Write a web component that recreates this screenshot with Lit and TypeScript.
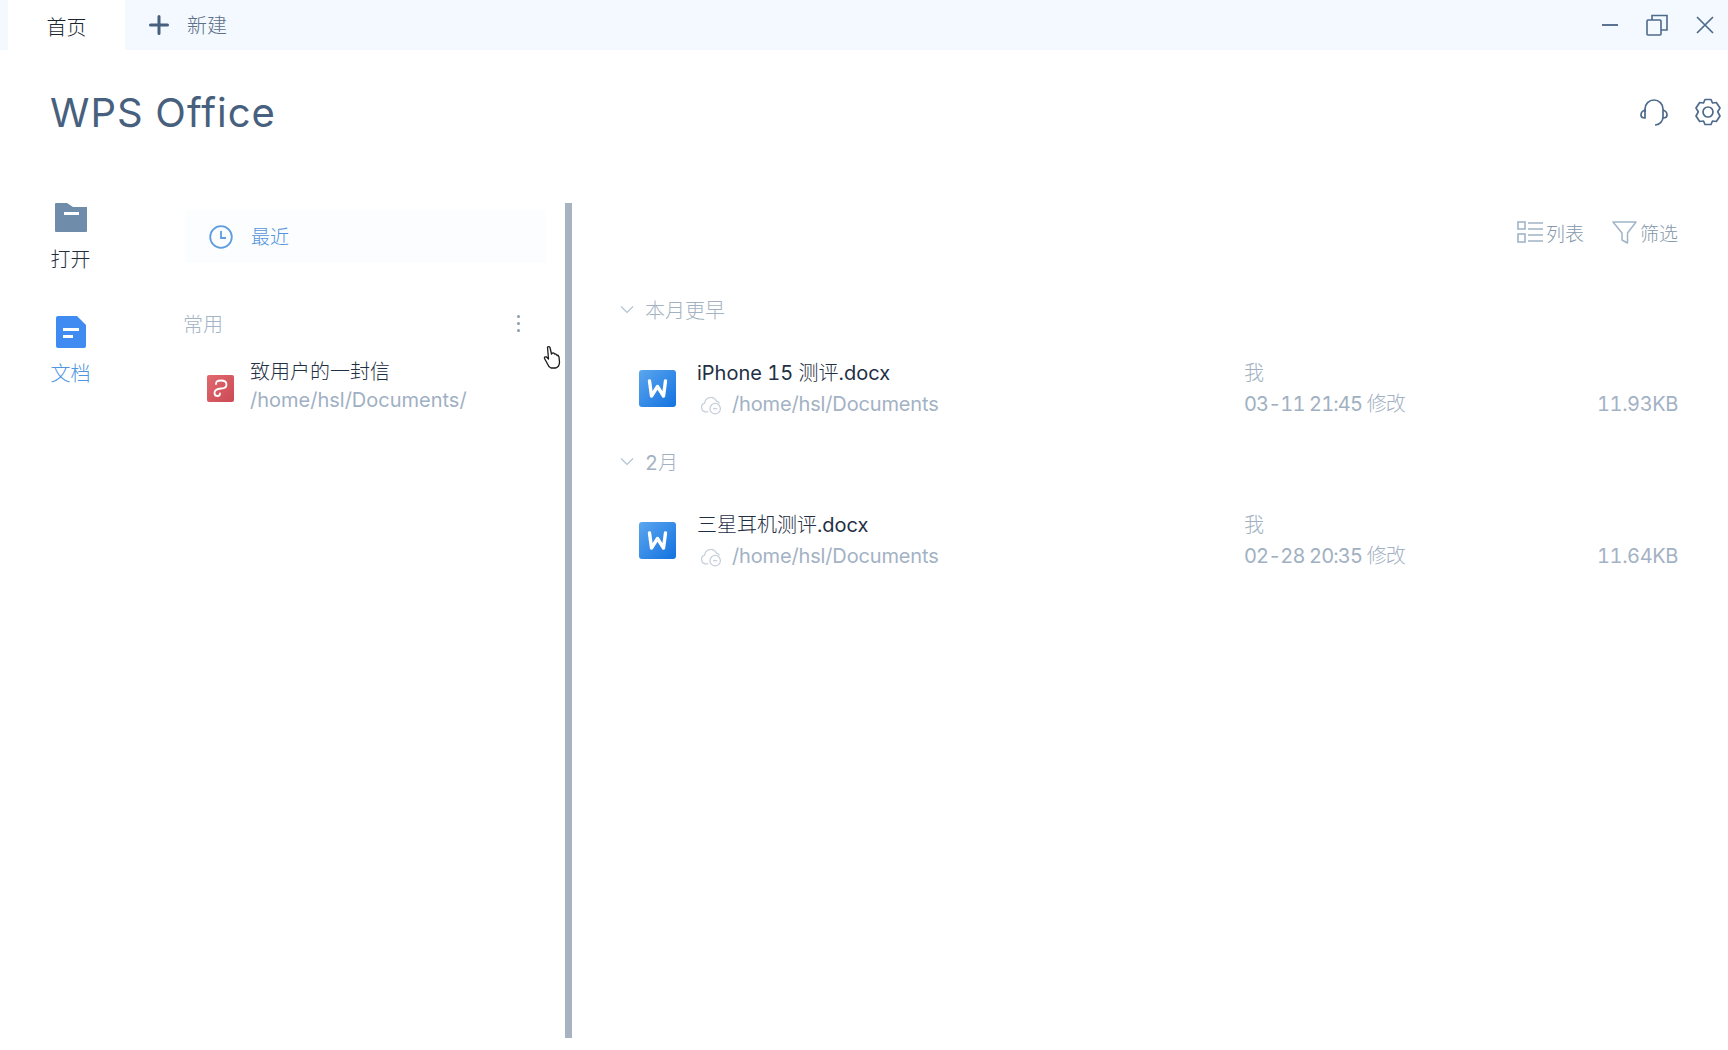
import { LitElement, html, css } from "lit";
import { customElement } from "lit/decorators.js";

const wIcon = html`<svg class="fileicon" viewBox="0 0 37 37"><defs><linearGradient id="wg" x1="0" y1="0" x2="1" y2="1"><stop offset="0" stop-color="#5ba6ee"/><stop offset="1" stop-color="#1272e0"/></linearGradient></defs><rect width="37" height="37" rx="3" fill="url(#wg)"/><path d="M10.5 11 L12.5 26 L18.5 16.5 L24.5 26 L26.5 11" fill="none" stroke="#fff" stroke-width="3.4" stroke-linecap="round" stroke-linejoin="round"/></svg>`;
const cloud = html`<svg class="cloud" viewBox="0 0 22 20" fill="none" stroke="#c5d0da" stroke-width="1.2"><path d="M8 17 H5.5 A4.3 4.3 0 0 1 4.5 8.6 A5.8 5.8 0 0 1 15.5 6.5 A4 4 0 0 1 18.5 9"/><circle cx="14.5" cy="14" r="5"/><path d="M12.5 14 H16.5"/></svg>`;
const chev = html`<svg class="chev" viewBox="0 0 14 9" fill="none" stroke="#b4c2d0" stroke-width="1.2"><path d="M1 1.5 L7 7.5 L13 1.5"/></svg>`;

/* Latin runs are regular weight, CJK runs stay light, as in the reference. */
const mixed = (text: string) =>
  text.split(/([\u0020-\u007e]+)/).filter(Boolean).map((part) =>
    /^[\u0020-\u007e]+$/.test(part) ? html`<span class="lat">${part}</span>` : part
  );

const files = [
  { group: "本月更早", name: "iPhone 15 测评.docx", date: "03-11 21:45 修改", size: "11.93KB" },
  { group: "2月", name: "三星耳机测评.docx", date: "02-28 20:35 修改", size: "11.64KB" },
];

@customElement("app-root")
export class AppRoot extends LitElement {
  static styles = css`
    :host { display: block; width: 1728px; height: 1050px; background: #fff; position: relative; overflow: hidden;
      font-family: "Inter", "Noto Sans CJK SC", sans-serif; font-weight: 300; font-size: 20px; color: #1f3044; font-variant-numeric: tabular-nums; }
    svg { display: block; flex: none; }
    .lat { font-weight: 400; white-space: pre; }
    .titlebar { height: 50px; background: #f3f9fe; display: flex; align-items: center; padding-left: 8px; }
    .tab { width: 117px; height: 50px; background: #fff; color: #1b2530; display: flex; align-items: center; justify-content: center; padding-top: 3px; box-sizing: border-box; }
    .new { display: flex; align-items: center; margin-left: 24px; color: #5d7088; gap: 18px; }
    .new span { padding-bottom: 2px; }
    .plus { width: 20px; height: 20px; }
    .winbtns { margin-left: auto; display: flex; align-items: center; padding-right: 13px; gap: 27px; }
    .header { height: 153px; display: flex; align-items: flex-start; box-sizing: border-box; padding: 43px 6px 0 50px; }
    .logo { font-family: "Inter", sans-serif; font-weight: 400; font-size: 40px; line-height: 40px; color: #47607e; letter-spacing: 1px; width: 225px; white-space: nowrap; }
    .hicons { margin-left: auto; display: flex; gap: 26px; padding-top: 5px; align-items: center; }
    .body { display: flex; height: 835px; }
    .nav { width: 141px; display: flex; flex-direction: column; align-items: center; flex: none; }
    .nav-item { display: flex; flex-direction: column; align-items: center; gap: 11px; width: 40px; margin-bottom: 42px; line-height: 28px; color: #1f2e3e; }
    .nav-item.on { color: #4f96e2; gap: 12px; }
    .nav-item svg { height: 32px; margin-left: 1px; }
    .panel { width: 424px; flex: none; box-sizing: border-box; padding: 7px 19px 0 42px; }
    .recent { height: 53px; margin-left: 2px; background: #fbfdfe; display: flex; align-items: center; padding-left: 24px; gap: 18px; color: #5494dc; font-size: 19px; }
    .recent span { padding-bottom: 2px; }
    .sect { display: flex; justify-content: space-between; align-items: center; margin-top: 46px; color: #a3b4c4; height: 28px; padding-right: 26px; }
    .dots { display: flex; flex-direction: column; gap: 4px; padding-top: 1px; }
    .dots i { width: 3px; height: 3px; border-radius: 50%; background: #8a9db6; display: block; }
    .fav { display: flex; align-items: center; gap: 16px; margin: 21px 0 0 24px; }
    .fav > svg { margin-top: 4px; }
    .fav .t { line-height: 28px; }
    .fav .p { color: #9fb0c4; line-height: 28px; }
    .bar { width: 7px; background: #a7b3c0; flex: none; }
    .main { flex: 1; box-sizing: border-box; padding: 14px 50px 0 48px; min-width: 0; }
    .tools { display: flex; justify-content: flex-end; align-items: center; height: 30px; color: #8497ab; font-size: 19px; }
    .tool { display: flex; align-items: center; gap: 3px; }
    .tool + .tool { margin-left: 28px; }
    .ghead { display: flex; align-items: center; gap: 11px; color: #a3b2c2; height: 28px; margin-top: 48px; }
    .ghead.next { margin-top: 27px; }
    .chev { width: 14px; height: 9px; }
    .row { display: grid; grid-template-columns: 58px 547px 1fr auto; margin: 33px 0 0 19px; line-height: 31px; height: 64px; align-items: center; }
    .fileicon { width: 37px; height: 37px; }
    .name { color: #1f3044; padding-top: 2px; }
    .sub { color: #a3b2c4; display: flex; align-items: center; gap: 9px; padding-left: 3px; letter-spacing: -0.15px; }
    .cloud { width: 23px; height: 21px; }
    .who { color: #9fb0c2; }
    .who.me { padding-top: 2px; }
    .who.date { letter-spacing: -0.85px; }
    .size { color: #a3b2c4; align-self: end; letter-spacing: -0.4px; }
    .cursor { position: absolute; left: 543px; top: 345px; width: 18px; height: 24px; }
  `;

  render() {
    return html`
      <div class="titlebar">
        <div class="tab">首页</div>
        <div class="new">
          <svg class="plus" viewBox="0 0 20 20" stroke="#47607e" stroke-width="3" stroke-linecap="round"><path d="M10 1.5 V18.5 M1.5 10 H18.5"/></svg>
          <span>新建</span>
        </div>
        <div class="winbtns">
          <svg width="18" height="20" viewBox="0 0 18 20" stroke="#5a7390" stroke-width="2"><path d="M1 10 H17"/></svg>
          <svg width="22" height="22" viewBox="0 0 22 22" fill="none" stroke="#4d6a8a" stroke-width="1.6"><rect x="1" y="6" width="14" height="15" rx="1"/><path d="M6 6 V1.5 H21 V16 H15"/></svg>
          <svg width="20" height="20" viewBox="0 0 20 20" stroke="#4d6a8a" stroke-width="1.7"><path d="M2 2 L18 18 M18 2 L2 18"/></svg>
        </div>
      </div>
      <div class="header">
        <div class="logo">WPS Office</div>
        <div class="hicons">
          <svg width="28" height="28" viewBox="0 0 28 28" fill="none" stroke="#4d6a8a" stroke-width="1.7"><path d="M5 14 V11 A9 9 0 0 1 23 11 V19 A8 8 0 0 1 15 27"/><path d="M5 12 C2 13 1 15 1 17 C1 19 3 20 5 20 Z"/><path d="M23 12 C26 13 27 15 27 17 C27 19 25 20 23 20"/></svg>
          <svg width="28" height="28" viewBox="0 0 28 28" fill="none" stroke="#4d6a8a" stroke-width="1.7"><path d="M11 1.5 H17 L18.5 5 L22.3 4.5 L26 10 L23.7 13.8 L26 18 L22.3 23.5 L18.5 23 L17 26.5 H11 L9.5 23 L5.7 23.5 L2 18 L4.3 13.8 L2 10 L5.7 4.5 L9.5 5 Z" stroke-linejoin="round"/><circle cx="14" cy="14" r="5"/></svg>
        </div>
      </div>
      <div class="body">
        <div class="nav">
          <div class="nav-item">
            <svg width="32" height="32" viewBox="0 0 32 32"><path d="M0 1 Q0 0 1 0 H12 L18 4 H32 V28 Q32 29 31 29 H1 Q0 29 0 28 Z" fill="#6f8cab"/><rect x="9" y="9" width="15" height="3" fill="#fff"/></svg>
            <span>打开</span>
          </div>
          <div class="nav-item on">
            <svg width="30" height="32" viewBox="0 0 30 32"><path d="M2 0 H21 L30 9 V30 Q30 32 28 32 H2 Q0 32 0 30 V2 Q0 0 2 0 Z" fill="#3f8bf2"/><rect x="7" y="12" width="16" height="3" fill="#fff"/><rect x="7" y="19" width="10" height="3" fill="#fff"/></svg>
            <span>文档</span>
          </div>
        </div>
        <div class="panel">
          <div class="recent">
            <svg width="24" height="24" viewBox="0 0 24 24" fill="none" stroke="#5d9de0" stroke-width="1.8"><circle cx="12" cy="12" r="10.8"/><path d="M12 6 V13 H17"/></svg>
            <span>最近</span>
          </div>
          <div class="sect"><span>常用</span><span class="dots"><i></i><i></i><i></i></span></div>
          <div class="fav">
            <svg width="27" height="27" viewBox="0 0 27 27"><defs><linearGradient id="pg" x1="0" y1="0" x2="1" y2="1"><stop offset="0" stop-color="#e0696f"/><stop offset="1" stop-color="#cc4a55"/></linearGradient></defs><rect width="27" height="27" rx="2" fill="url(#pg)"/><path d="M9 9 Q9 5.5 14 5.5 Q19.5 5.5 19.5 9.5 Q19.5 13.5 14 13.5 Q7.5 14 7.5 18 Q7.5 21 10.5 21 Q13 21 13 18.5" fill="none" stroke="#fff" stroke-width="1.8" stroke-linecap="round"/></svg>
            <div>
              <div class="t">致用户的一封信</div>
              <div class="p">${mixed("/home/hsl/Documents/")}</div>
            </div>
          </div>
        </div>
        <div class="bar"></div>
        <div class="main">
          <div class="tools">
            <div class="tool">
              <svg width="26" height="22" viewBox="0 0 26 22" fill="none" stroke="#a0b4c8" stroke-width="1.6"><rect x="1" y="1" width="7" height="7"/><rect x="1" y="13" width="7" height="8"/><path d="M11 2 H26 M11 8 H26 M11 14 H26 M11 20 H26"/></svg>
              <span>列表</span>
            </div>
            <div class="tool">
              <svg width="25" height="23" viewBox="0 0 25 23" fill="none" stroke="#a0b4c8" stroke-width="1.5" stroke-linejoin="round"><path d="M1 1 H24 L15.5 12 V22 L10 19 V12 Z"/></svg>
              <span>筛选</span>
            </div>
          </div>
          ${files.map((f, i) => html`
            <div class="ghead ${i ? "next" : ""}">${chev}<span>${mixed(f.group)}</span></div>
            <div class="row">
              ${wIcon}
              <div>
                <div class="name">${mixed(f.name)}</div>
                <div class="sub">${cloud}<span>${mixed("/home/hsl/Documents")}</span></div>
              </div>
              <div>
                <div class="who me">我</div>
                <div class="who date">${mixed(f.date)}</div>
              </div>
              <div class="size">${mixed(f.size)}</div>
            </div>
          `)}
        </div>
      </div>
      <svg class="cursor" viewBox="0 0 18 24" fill="#fff" stroke="#1a1a1a" stroke-width="1.3" stroke-linejoin="round"><path d="M4.5 2 Q6.3 1 7 2.5 L8.5 9 L9.5 8 Q11 7.5 11.5 9 Q13 8.5 13.5 10 Q15.5 10 16 12 L16.5 17 Q16.5 22 12.5 23 L8 23 Q5.5 22 4 18 L1.5 13.5 Q1 11.5 3.5 12 L5.5 14 Z"/></svg>
    `;
  }
}
